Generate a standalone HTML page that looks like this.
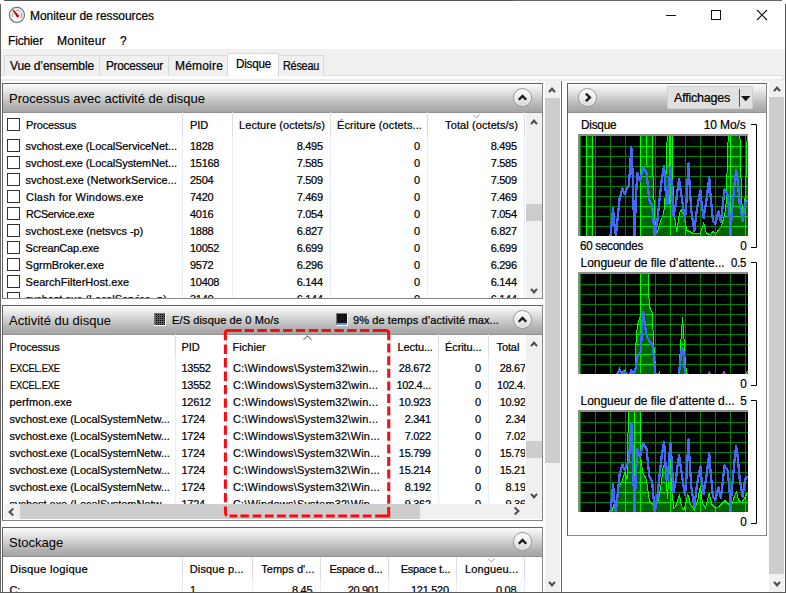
<!DOCTYPE html>
<html><head><meta charset="utf-8"><title>Moniteur de ressources</title>
<style>
html,body{margin:0;padding:0;width:786px;height:593px;overflow:hidden;}
body{width:786px;height:593px;overflow:hidden;background:#fff;position:relative;font-family:"Liberation Sans",sans-serif;}
.a{position:absolute;box-sizing:border-box;}
.t{position:absolute;white-space:pre;line-height:1;font-family:"Liberation Sans",sans-serif;-webkit-text-stroke:0.22px #000;}
.t.h{-webkit-text-stroke:0;}
.hdr{background:linear-gradient(#fbfbfb 0%,#ebebeb 20%,#cecece 50%,#b1b1b1 80%,#a5a5a5 100%);border-bottom:1px solid #929292;}
.panel{border:1px solid #606060;border-right-color:#868686;border-bottom-color:#868686;background:#fff;}
.cb{position:absolute;width:13px;height:13px;box-sizing:border-box;border:1px solid #333;background:#fff;left:7px;}
.vs{position:absolute;width:1px;background:linear-gradient(#dedede 0,#dedede 24px,#e6eef8 24px);}
.circ{position:absolute;width:19px;height:19px;border-radius:50%;box-sizing:border-box;border:1px solid #979797;background:linear-gradient(rgba(255,255,255,0.8),rgba(255,255,255,0.42));box-shadow:inset 0 0 0 1px rgba(255,255,255,0.75);}
.clip{position:absolute;left:0;top:0;width:786px;height:593px;}
#root{position:absolute;left:0;top:0;width:786px;height:593px;overflow:hidden;background:#fff;}
</style></head><body>
<div id="root">
<!-- title + menu -->
<div class="a" style="left:0;top:0;width:786px;height:49px;background:#fff"></div>
<!-- tab strip -->
<div class="a" style="left:0;top:49px;width:786px;height:32px;background:#f0f0f0"></div>
<!-- tab body frame -->
<div class="a" style="left:1px;top:75px;width:782px;height:6px;border-right:1px solid #dcdcdc;background:#fff;border-top:1px solid #dcdcdc;border-bottom:2px solid #ececec"></div>
<!-- tabs -->
<div class="a" style="left:4px;top:55px;width:96px;height:21px;background:#f0f0f0;border:1px solid #d9d9d9;border-bottom:none"></div>
<div class="a" style="left:99px;top:55px;width:70px;height:21px;background:#f0f0f0;border:1px solid #d9d9d9;border-bottom:none"></div>
<div class="a" style="left:168px;top:55px;width:60px;height:21px;background:#f0f0f0;border:1px solid #d9d9d9;border-bottom:none"></div>
<div class="a" style="left:278px;top:55px;width:46px;height:21px;background:#f0f0f0;border:1px solid #d9d9d9;border-bottom:none"></div>
<div class="a" style="left:227px;top:53px;width:52px;height:24px;background:#fff;border:1px solid #d9d9d9;border-bottom:none"></div>

<!-- PANEL 1 -->
<div class="a panel" style="left:2px;top:83px;width:541px;height:216px"></div>
<div class="a hdr" style="left:3px;top:84px;width:539px;height:29px"></div>
<div class="a" style="left:526px;top:113px;width:16px;height:185px;background:#f0f0f0"></div>
<div class="a" style="left:526px;top:204px;width:16px;height:17px;background:#cdcdcd"></div>
<div class="vs" style="left:182px;top:112px;height:186px"></div>
<div class="vs" style="left:232px;top:112px;height:186px"></div>
<div class="vs" style="left:330px;top:112px;height:186px"></div>
<div class="vs" style="left:427px;top:112px;height:186px"></div>
<div class="vs" style="left:524px;top:112px;height:186px"></div>
<div class="circ" style="left:513px;top:88px"></div>

<!-- PANEL 2 -->
<div class="a panel" style="left:2px;top:305px;width:541px;height:216px"></div>
<div class="a hdr" style="left:3px;top:306px;width:539px;height:29px"></div>
<div class="a" style="left:526px;top:335px;width:16px;height:184px;background:#f0f0f0"></div>
<div class="a" style="left:526px;top:441px;width:16px;height:17px;background:#cdcdcd"></div>
<div class="a" style="left:4px;top:504px;width:538px;height:15px;background:#f0f0f0"></div>
<div class="a" style="left:20px;top:504px;width:400px;height:15px;background:#cdcdcd"></div>
<div class="vs" style="left:175px;top:334px;height:169px"></div>
<div class="vs" style="left:226px;top:334px;height:169px"></div>
<div class="vs" style="left:390px;top:334px;height:169px"></div>
<div class="vs" style="left:438px;top:334px;height:169px"></div>
<div class="vs" style="left:488px;top:334px;height:169px"></div>
<div class="circ" style="left:513px;top:310px"></div>
<!-- legend squares -->
<svg class="a" style="left:154px;top:313px" width="12" height="13" shape-rendering="crispEdges">
<defs><pattern id="pg" width="2" height="2" patternUnits="userSpaceOnUse"><rect width="2" height="2" fill="#00a000"/><rect x="0" y="1" width="1" height="1" fill="#000"/></pattern>
<pattern id="pb" width="2" height="2" patternUnits="userSpaceOnUse"><rect width="2" height="2" fill="#0000f0"/><rect x="0" y="1" width="1" height="1" fill="#000"/></pattern></defs>
<rect width="12" height="13" fill="#fff"/><rect width="11" height="12" fill="#777"/><rect x="1" y="1" width="10" height="11" fill="url(#pg)"/></svg>
<svg class="a" style="left:336px;top:313px" width="12" height="13" shape-rendering="crispEdges">
<rect width="12" height="13" fill="#fff"/><rect width="11" height="12" fill="#777"/><rect x="1" y="1" width="10" height="11" fill="url(#pb)"/><rect x="1" y="10" width="10" height="2" fill="#5f96ff"/></svg>

<!-- PANEL 3 -->
<div class="a panel" style="left:2px;top:527px;width:541px;height:80px"></div>
<div class="a hdr" style="left:3px;top:528px;width:539px;height:29px"></div>
<div class="vs" style="left:182px;top:557px;height:40px"></div>
<div class="vs" style="left:252px;top:557px;height:40px"></div>
<div class="vs" style="left:320px;top:557px;height:40px"></div>
<div class="vs" style="left:388px;top:557px;height:40px"></div>
<div class="vs" style="left:456px;top:557px;height:40px"></div>
<div class="vs" style="left:524px;top:557px;height:40px"></div>
<div class="circ" style="left:513px;top:532px"></div>

<!-- left outer scrollbar -->
<div class="a" style="left:545px;top:81px;width:15px;height:512px;background:#f0f0f0"></div>
<div class="a" style="left:545px;top:98px;width:15px;height:365px;background:#cdcdcd"></div>
<div class="a" style="left:561px;top:81px;width:1px;height:512px;background:#696969"></div>

<!-- RIGHT PANEL -->
<div class="a panel" style="left:567px;top:83px;width:200px;height:453px"></div>
<div class="a hdr" style="left:568px;top:84px;width:198px;height:29px"></div>
<div class="circ" style="left:578px;top:88px"></div>
<div class="a" style="left:667px;top:86px;width:86px;height:23px;background:#e1e1e1;border:1px solid #d0d0d0"></div>
<div class="a" style="left:738.6px;top:89px;width:1.4px;height:18px;background:#555"></div>
<!-- right scrollbar -->
<div class="a" style="left:769px;top:81px;width:15px;height:512px;background:#f0f0f0"></div>
<div class="a" style="left:769px;top:97px;width:15px;height:477px;background:#cdcdcd"></div>

<!-- graphs -->
<svg class="a" style="left:0;top:0" width="786" height="593"><defs><clipPath id="a136"><polygon points="580.0,238.0 580.0,237.0 586.6,237.0 586.6,134.0 592.3,134.0 592.3,237.0 640.4,237.0 640.4,134.0 652.4,134.0 653.0,176.0 654.8,219.0 656.7,234.0 660.0,223.0 663.7,213.5 665.6,191.0 666.5,154.0 667.4,134.0 672.1,134.0 673.0,186.0 674.8,219.0 676.7,232.0 679.5,212.6 681.3,209.8 684.1,217.2 686.9,230.2 692.5,233.0 699.9,233.9 703.6,222.8 706.4,233.0 710.1,234.8 712.9,231.7 715.7,233.5 721.2,226.5 724.0,217.2 725.9,207.9 727.2,167.1 728.3,134.0 739.8,134.0 740.7,155.0 741.0,178.0 742.6,219.0 744.4,211.6 746.3,169.0 747.2,134.0 749.0,134.0 749.0,238.0"/></clipPath><clipPath id="c136"><rect x="580" y="136" width="168" height="100"/></clipPath><clipPath id="a274"><polygon points="580.0,376.0 580.0,376.5 615.9,376.5 619.6,368.2 621.5,371.9 625.2,369.7 628.0,376.5 631.3,369.1 633.5,371.9 635.0,368.2 635.7,347.8 636.9,331.1 638.2,321.8 640.0,318.1 640.4,292.1 641.0,272.0 648.0,272.0 648.4,279.1 648.7,295.8 649.8,307.0 652.1,312.5 653.0,329.2 653.6,342.2 654.8,355.2 655.4,371.9 657.6,376.5 659.5,372.5 661.0,376.5 678.6,376.5 680.4,347.8 681.9,327.4 682.4,317.2 683.2,325.5 684.1,340.4 685.0,357.1 686.0,368.2 687.8,376.5 707.5,376.5 709.2,373.0 711.0,376.5 722.3,376.5 724.0,373.0 725.8,376.5 745.0,376.5 747.2,371.5 749.0,370.0 749.0,376.0"/></clipPath><clipPath id="c274"><rect x="580" y="274" width="168" height="100"/></clipPath><clipPath id="a412"><polygon points="580.0,514.0 580.0,513.0 611.3,513.0 614.0,504.3 615.9,510.0 618.7,487.6 622.4,480.2 625.2,471.0 627.0,479.3 628.5,410.0 640.4,410.0 641.0,459.8 642.8,472.8 645.6,477.4 647.4,485.8 649.3,500.6 652.1,503.4 655.8,507.1 658.6,498.8 661.3,483.9 662.8,469.1 664.6,463.5 666.5,480.2 667.4,498.8 669.3,469.1 670.6,459.8 672.1,493.2 673.9,508.0 675.8,506.2 679.5,494.1 681.3,506.2 684.1,509.9 687.8,494.1 690.6,504.3 694.3,509.9 698.0,498.8 700.4,485.8 702.3,502.5 705.5,508.0 709.2,493.2 711.9,504.3 715.7,508.0 719.4,506.2 724.9,500.6 728.7,504.3 731.4,506.2 734.2,496.9 736.4,492.3 738.8,500.6 741.6,502.5 744.4,498.8 747.2,493.2 749.0,493.0 749.0,514.0"/></clipPath><clipPath id="c412"><rect x="580" y="412" width="168" height="100"/></clipPath></defs>
<rect x="578" y="134" width="170" height="102" fill="#8c8c8c"/><g clip-path="url(#c136)" shape-rendering="crispEdges"><rect x="580" y="136" width="168" height="100" fill="#000"/>
<path d="M580 146.5 H748 M580 156.5 H748 M580 166.5 H748 M580 176.5 H748 M580 186.5 H748 M580 196.5 H748 M580 206.5 H748 M580 216.5 H748 M580 226.5 H748 M580.5 136 V236 M595.5 136 V236 M610.5 136 V236 M625.5 136 V236 M640.5 136 V236 M655.5 136 V236 M670.5 136 V236 M685.5 136 V236 M700.5 136 V236 M715.5 136 V236 M730.5 136 V236 M745.5 136 V236" stroke="#008200" stroke-width="1" fill="none"/>
<polygon points="580.0,238.0 580.0,237.0 586.6,237.0 586.6,134.0 592.3,134.0 592.3,237.0 640.4,237.0 640.4,134.0 652.4,134.0 653.0,176.0 654.8,219.0 656.7,234.0 660.0,223.0 663.7,213.5 665.6,191.0 666.5,154.0 667.4,134.0 672.1,134.0 673.0,186.0 674.8,219.0 676.7,232.0 679.5,212.6 681.3,209.8 684.1,217.2 686.9,230.2 692.5,233.0 699.9,233.9 703.6,222.8 706.4,233.0 710.1,234.8 712.9,231.7 715.7,233.5 721.2,226.5 724.0,217.2 725.9,207.9 727.2,167.1 728.3,134.0 739.8,134.0 740.7,155.0 741.0,178.0 742.6,219.0 744.4,211.6 746.3,169.0 747.2,134.0 749.0,134.0 749.0,238.0" fill="#006400" stroke="none"/>
<path d="M580 146.5 H748 M580 156.5 H748 M580 166.5 H748 M580 176.5 H748 M580 186.5 H748 M580 196.5 H748 M580 206.5 H748 M580 216.5 H748 M580 226.5 H748 M580.5 136 V236 M595.5 136 V236 M610.5 136 V236 M625.5 136 V236 M640.5 136 V236 M655.5 136 V236 M670.5 136 V236 M685.5 136 V236 M700.5 136 V236 M715.5 136 V236 M730.5 136 V236 M745.5 136 V236" stroke="#00e600" stroke-width="1" fill="none" clip-path="url(#a136)"/>
<polyline points="580.0,237.0 586.6,237.0 586.6,134.0 592.3,134.0 592.3,237.0 640.4,237.0 640.4,134.0 652.4,134.0 653.0,176.0 654.8,219.0 656.7,234.0 660.0,223.0 663.7,213.5 665.6,191.0 666.5,154.0 667.4,134.0 672.1,134.0 673.0,186.0 674.8,219.0 676.7,232.0 679.5,212.6 681.3,209.8 684.1,217.2 686.9,230.2 692.5,233.0 699.9,233.9 703.6,222.8 706.4,233.0 710.1,234.8 712.9,231.7 715.7,233.5 721.2,226.5 724.0,217.2 725.9,207.9 727.2,167.1 728.3,134.0 739.8,134.0 740.7,155.0 741.0,178.0 742.6,219.0 744.4,211.6 746.3,169.0 747.2,134.0 749.0,134.0" fill="none" stroke="#00ff00" stroke-width="1"/>
<path d="M646.5 135.0 V165.0" stroke="#00ff00" stroke-width="1"/>
<path d="M669.3 135.0 V204.0" stroke="#00ff00" stroke-width="1"/>
<path d="M670.6 135.0 V167.0" stroke="#00ff00" stroke-width="1"/>
<path d="M730.5 135.0 V236.0" stroke="#00ff00" stroke-width="1"/>
<polyline points="610.5,236.0 613.1,207.9 614.0,221.0 615.9,236.0 617.2,222.8 619.6,198.6 622.4,188.4 624.6,194.0 628.9,184.7 629.8,172.7 631.3,146.7 632.6,172.7 633.5,204.2 634.4,236.0 635.7,204.2 637.2,172.7 640.0,181.0 643.2,167.1 646.5,172.7 649.3,200.5 652.1,205.1 654.8,236.0 657.6,219.0 660.4,191.2 661.9,178.2 664.1,166.2 666.5,203.3 667.8,204.2 669.3,180.1 670.6,167.1 672.1,191.2 673.4,216.3 675.8,204.2 677.6,189.4 679.1,179.2 681.3,194.9 683.2,207.9 685.0,219.0 686.3,204.2 687.5,182.0 688.4,163.4 689.7,185.7 691.2,209.8 694.3,231.1 697.1,207.9 700.4,190.3 701.7,204.2 703.6,218.1 706.4,200.5 709.2,177.3 710.5,194.9 712.9,220.9 715.3,223.7 718.4,211.6 720.9,221.8 723.1,202.4 724.4,189.4 727.7,194.9 729.6,215.3 730.5,236.0 731.4,219.1 734.2,187.5 736.1,169.9 737.6,180.1 739.8,204.2 742.6,220.9 744.4,207.9 745.7,202.4 748.0,200.5" fill="none" stroke="#4169ff" stroke-width="2.3" stroke-linejoin="round"/></g>
<rect x="578" y="272" width="170" height="102" fill="#8c8c8c"/><g clip-path="url(#c274)" shape-rendering="crispEdges"><rect x="580" y="274" width="168" height="100" fill="#000"/>
<path d="M580 284.5 H748 M580 294.5 H748 M580 304.5 H748 M580 314.5 H748 M580 324.5 H748 M580 334.5 H748 M580 344.5 H748 M580 354.5 H748 M580 364.5 H748 M580.5 274 V374 M595.5 274 V374 M610.5 274 V374 M625.5 274 V374 M640.5 274 V374 M655.5 274 V374 M670.5 274 V374 M685.5 274 V374 M700.5 274 V374 M715.5 274 V374 M730.5 274 V374 M745.5 274 V374" stroke="#008200" stroke-width="1" fill="none"/>
<polygon points="580.0,376.0 580.0,376.5 615.9,376.5 619.6,368.2 621.5,371.9 625.2,369.7 628.0,376.5 631.3,369.1 633.5,371.9 635.0,368.2 635.7,347.8 636.9,331.1 638.2,321.8 640.0,318.1 640.4,292.1 641.0,272.0 648.0,272.0 648.4,279.1 648.7,295.8 649.8,307.0 652.1,312.5 653.0,329.2 653.6,342.2 654.8,355.2 655.4,371.9 657.6,376.5 659.5,372.5 661.0,376.5 678.6,376.5 680.4,347.8 681.9,327.4 682.4,317.2 683.2,325.5 684.1,340.4 685.0,357.1 686.0,368.2 687.8,376.5 707.5,376.5 709.2,373.0 711.0,376.5 722.3,376.5 724.0,373.0 725.8,376.5 745.0,376.5 747.2,371.5 749.0,370.0 749.0,376.0" fill="#006400" stroke="none"/>
<path d="M580 284.5 H748 M580 294.5 H748 M580 304.5 H748 M580 314.5 H748 M580 324.5 H748 M580 334.5 H748 M580 344.5 H748 M580 354.5 H748 M580 364.5 H748 M580.5 274 V374 M595.5 274 V374 M610.5 274 V374 M625.5 274 V374 M640.5 274 V374 M655.5 274 V374 M670.5 274 V374 M685.5 274 V374 M700.5 274 V374 M715.5 274 V374 M730.5 274 V374 M745.5 274 V374" stroke="#00e600" stroke-width="1" fill="none" clip-path="url(#a274)"/>
<polyline points="580.0,376.5 615.9,376.5 619.6,368.2 621.5,371.9 625.2,369.7 628.0,376.5 631.3,369.1 633.5,371.9 635.0,368.2 635.7,347.8 636.9,331.1 638.2,321.8 640.0,318.1 640.4,292.1 641.0,272.0 648.0,272.0 648.4,279.1 648.7,295.8 649.8,307.0 652.1,312.5 653.0,329.2 653.6,342.2 654.8,355.2 655.4,371.9 657.6,376.5 659.5,372.5 661.0,376.5 678.6,376.5 680.4,347.8 681.9,327.4 682.4,317.2 683.2,325.5 684.1,340.4 685.0,357.1 686.0,368.2 687.8,376.5 707.5,376.5 709.2,373.0 711.0,376.5 722.3,376.5 724.0,373.0 725.8,376.5 745.0,376.5 747.2,371.5 749.0,370.0" fill="none" stroke="#00ff00" stroke-width="1"/>
<polyline points="615.9,376.5 619.6,370.0 622.4,373.4 625.2,372.0 628.9,376.5 631.3,370.0 633.1,376.5 635.4,370.0 637.2,357.1 640.9,351.5 641.9,329.2 643.2,311.6 644.7,323.7 646.5,334.8 649.3,341.3 652.4,345.0 653.9,357.1 655.4,376.5 678.6,376.5 680.0,364.5 681.9,347.8 683.2,349.6 684.1,360.8 685.0,371.9 686.9,376.5 707.5,376.5 709.2,372.5 711.0,376.5 722.3,376.5 724.0,372.5 725.8,376.5 748.0,376.5" fill="none" stroke="#4169ff" stroke-width="2.3" stroke-linejoin="round"/></g>
<rect x="578" y="410" width="170" height="102" fill="#8c8c8c"/><g clip-path="url(#c412)" shape-rendering="crispEdges"><rect x="580" y="412" width="168" height="100" fill="#000"/>
<path d="M580 422.5 H748 M580 432.5 H748 M580 442.5 H748 M580 452.5 H748 M580 462.5 H748 M580 472.5 H748 M580 482.5 H748 M580 492.5 H748 M580 502.5 H748 M580.5 412 V512 M595.5 412 V512 M610.5 412 V512 M625.5 412 V512 M640.5 412 V512 M655.5 412 V512 M670.5 412 V512 M685.5 412 V512 M700.5 412 V512 M715.5 412 V512 M730.5 412 V512 M745.5 412 V512" stroke="#008200" stroke-width="1" fill="none"/>
<polygon points="580.0,514.0 580.0,513.0 611.3,513.0 614.0,504.3 615.9,510.0 618.7,487.6 622.4,480.2 625.2,471.0 627.0,479.3 628.5,410.0 640.4,410.0 641.0,459.8 642.8,472.8 645.6,477.4 647.4,485.8 649.3,500.6 652.1,503.4 655.8,507.1 658.6,498.8 661.3,483.9 662.8,469.1 664.6,463.5 666.5,480.2 667.4,498.8 669.3,469.1 670.6,459.8 672.1,493.2 673.9,508.0 675.8,506.2 679.5,494.1 681.3,506.2 684.1,509.9 687.8,494.1 690.6,504.3 694.3,509.9 698.0,498.8 700.4,485.8 702.3,502.5 705.5,508.0 709.2,493.2 711.9,504.3 715.7,508.0 719.4,506.2 724.9,500.6 728.7,504.3 731.4,506.2 734.2,496.9 736.4,492.3 738.8,500.6 741.6,502.5 744.4,498.8 747.2,493.2 749.0,493.0 749.0,514.0" fill="#006400" stroke="none"/>
<path d="M580 422.5 H748 M580 432.5 H748 M580 442.5 H748 M580 452.5 H748 M580 462.5 H748 M580 472.5 H748 M580 482.5 H748 M580 492.5 H748 M580 502.5 H748 M580.5 412 V512 M595.5 412 V512 M610.5 412 V512 M625.5 412 V512 M640.5 412 V512 M655.5 412 V512 M670.5 412 V512 M685.5 412 V512 M700.5 412 V512 M715.5 412 V512 M730.5 412 V512 M745.5 412 V512" stroke="#00e600" stroke-width="1" fill="none" clip-path="url(#a412)"/>
<polyline points="580.0,513.0 611.3,513.0 614.0,504.3 615.9,510.0 618.7,487.6 622.4,480.2 625.2,471.0 627.0,479.3 628.5,410.0 640.4,410.0 641.0,459.8 642.8,472.8 645.6,477.4 647.4,485.8 649.3,500.6 652.1,503.4 655.8,507.1 658.6,498.8 661.3,483.9 662.8,469.1 664.6,463.5 666.5,480.2 667.4,498.8 669.3,469.1 670.6,459.8 672.1,493.2 673.9,508.0 675.8,506.2 679.5,494.1 681.3,506.2 684.1,509.9 687.8,494.1 690.6,504.3 694.3,509.9 698.0,498.8 700.4,485.8 702.3,502.5 705.5,508.0 709.2,493.2 711.9,504.3 715.7,508.0 719.4,506.2 724.9,500.6 728.7,504.3 731.4,506.2 734.2,496.9 736.4,492.3 738.8,500.6 741.6,502.5 744.4,498.8 747.2,493.2 749.0,493.0" fill="none" stroke="#00ff00" stroke-width="1"/>
<path d="M634.4 411.0 V512.0" stroke="#00ff00" stroke-width="1"/>
<polyline points="610.5,512.0 613.1,483.9 614.0,497.0 615.9,512.0 617.2,498.8 619.6,474.6 622.4,464.4 624.6,470.0 628.9,460.7 629.8,448.7 631.3,422.7 632.6,448.7 633.5,480.2 634.4,512.0 635.7,480.2 637.2,448.7 640.0,457.0 643.2,443.1 646.5,448.7 649.3,476.5 652.1,481.1 654.8,512.0 657.6,495.0 660.4,467.2 661.9,454.2 664.1,442.2 666.5,479.3 667.8,480.2 669.3,456.1 670.6,443.1 672.1,467.2 673.4,492.3 675.8,480.2 677.6,465.4 679.1,455.2 681.3,470.9 683.2,483.9 685.0,495.0 686.3,480.2 687.5,458.0 688.4,439.4 689.7,461.7 691.2,485.8 694.3,507.1 697.1,483.9 700.4,466.3 701.7,480.2 703.6,494.1 706.4,476.5 709.2,453.3 710.5,470.9 712.9,496.9 715.3,499.7 718.4,487.6 720.9,497.8 723.1,478.4 724.4,465.4 727.7,470.9 729.6,491.3 730.5,512.0 731.4,495.1 734.2,463.5 736.1,445.9 737.6,456.1 739.8,480.2 742.6,496.9 744.4,483.9 745.7,478.4 748.0,476.5" fill="none" stroke="#4169ff" stroke-width="2.3" stroke-linejoin="round"/></g>
</svg>

<!-- brackets -->
<svg class="a" style="left:0;top:0" width="786" height="593"><path d="M751 124.5 H756.5 V247.5 H751 M751 262.5 H756.5 V385.5 H751 M751 400.5 H756.5 V523.5 H751" fill="none" stroke="#000" stroke-width="1"/></svg>
<!-- app icon -->
<svg class="a" style="left:7px;top:5px" width="20" height="20" viewBox="0 0 20 20">
<circle cx="9.9" cy="9.9" r="7.5" fill="#fafafa" stroke="#737373" stroke-width="1.3"/>
<circle cx="9.9" cy="9.9" r="6.4" fill="none" stroke="#dedede" stroke-width="0.9"/>
<path d="M5.4 12.1 L5.4 8.2" fill="none" stroke="#86a08a" stroke-width="0.9"/>
<path d="M8.6 5.4 Q11.8 4.6 13.7 7.1" fill="none" stroke="#86a08a" stroke-width="0.9"/>
<path d="M14.5 8.2 L14.5 11.3 Q14.4 12.5 13.2 12.8" fill="none" stroke="#f07c1e" stroke-width="1.1"/>
<path d="M5.5 5.5 L6.7 4.7 L12.4 11.1 L10.5 13.1 Z" fill="#d4000f"/>
</svg>
<!-- window controls -->
<div class="a" style="left:666px;top:15px;width:10px;height:1px;background:#111"></div>
<div class="a" style="left:711px;top:10px;width:10px;height:10px;border:1px solid #111"></div>
<svg class="a" style="left:756px;top:9px" width="12" height="12"><path d="M1 1 L11 11 M11 1 L1 11" stroke="#111" stroke-width="1.1" fill="none"/></svg>
<!-- circle button chevrons -->
<svg class="a" style="left:513px;top:88px" width="19" height="19"><path d="M5.8 11.8 L9.5 8 L13.2 11.8" fill="none" stroke="#1a1a1a" stroke-width="2.3"/></svg>
<svg class="a" style="left:513px;top:310px" width="19" height="19"><path d="M5.8 11.8 L9.5 8 L13.2 11.8" fill="none" stroke="#1a1a1a" stroke-width="2.3"/></svg>
<svg class="a" style="left:513px;top:532px" width="19" height="19"><path d="M5.8 11.8 L9.5 8 L13.2 11.8" fill="none" stroke="#1a1a1a" stroke-width="2.3"/></svg>
<svg class="a" style="left:578px;top:88px" width="19" height="19"><path d="M7.9 5.6 L11.9 9.4 L7.9 13.2" fill="none" stroke="#1a1a1a" stroke-width="2.3"/></svg>
<!-- dropdown arrow -->
<svg class="a" style="left:741px;top:95px" width="10" height="8"><path d="M0 1 L9.4 1 L4.7 6.2 Z" fill="#111"/></svg>
<!-- scroll arrows -->
<svg class="a" style="left:547.4px;top:85.6px" width="10" height="8"><path d="M2 6.1 L5 2.7 L8 6.1" fill="none" stroke="#4c4c4c" stroke-width="2.1"/></svg>
<svg class="a" style="left:771.5px;top:85.3px" width="10" height="8"><path d="M2 6.1 L5 2.7 L8 6.1" fill="none" stroke="#4c4c4c" stroke-width="2.1"/></svg>
<svg class="a" style="left:771.6px;top:580px" width="10" height="8"><path d="M2 1.9 L5 5.3 L8 1.9" fill="none" stroke="#4c4c4c" stroke-width="2.1"/></svg>
<svg class="a" style="left:547.4px;top:580px" width="10" height="8"><path d="M2 1.9 L5 5.3 L8 1.9" fill="none" stroke="#4c4c4c" stroke-width="2.1"/></svg>
<svg class="a" style="left:528.5px;top:117.6px" width="10" height="8"><path d="M2 6.1 L5 2.7 L8 6.1" fill="none" stroke="#4c4c4c" stroke-width="2.1"/></svg>
<svg class="a" style="left:528.5px;top:286.5px" width="10" height="8"><path d="M2 1.9 L5 5.3 L8 1.9" fill="none" stroke="#4c4c4c" stroke-width="2.1"/></svg>
<svg class="a" style="left:528.5px;top:339.6px" width="10" height="8"><path d="M2 6.1 L5 2.7 L8 6.1" fill="none" stroke="#4c4c4c" stroke-width="2.1"/></svg>
<svg class="a" style="left:528.5px;top:491.7px" width="10" height="8"><path d="M2 1.9 L5 5.3 L8 1.9" fill="none" stroke="#4c4c4c" stroke-width="2.1"/></svg>
<svg class="a" style="left:6.8px;top:506.6px" width="8" height="10"><path d="M6.3 1.6 L2.6 5 L6.3 8.4" fill="none" stroke="#505050" stroke-width="2.1"/></svg>
<svg class="a" style="left:512.5px;top:506.4px" width="8" height="10"><path d="M1.7 1.6 L5.4 5 L1.7 8.4" fill="none" stroke="#505050" stroke-width="2.1"/></svg>
<!-- sort indicators -->
<svg class="a" style="left:472.3px;top:113.6px" width="10" height="6"><path d="M1 0.5 L4.4 3.9 L7.8 0.5" fill="none" stroke="#9a9a9a" stroke-width="1"/></svg>
<svg class="a" style="left:303px;top:335.3px" width="10" height="6"><path d="M0.5 4.8 L4.5 0.8 L8.5 4.8" fill="none" stroke="#7c7c7c" stroke-width="1.1"/></svg>
<svg class="a" style="left:486.8px;top:557.6px" width="10" height="6"><path d="M1 0.5 L4.4 3.9 L7.8 0.5" fill="none" stroke="#9a9a9a" stroke-width="1"/></svg>
<!-- checkboxes -->
<div class="clip" style="clip-path:inset(0 261px 295px 0)">
<div class="cb" style="top:118px"></div>
<div class="cb" style="top:139px"></div>
<div class="cb" style="top:156px"></div>
<div class="cb" style="top:173px"></div>
<div class="cb" style="top:190px"></div>
<div class="cb" style="top:207px"></div>
<div class="cb" style="top:224px"></div>
<div class="cb" style="top:241px"></div>
<div class="cb" style="top:258px"></div>
<div class="cb" style="top:275px"></div>
<div class="cb" style="top:292px"></div>
</div>

<!-- text -->
<span class="t" style="left:30.00px;top:9.84px;font-size:12px;letter-spacing:-0.063px;color:#000">Moniteur de ressources</span>
<span class="t" style="left:8.00px;top:34.84px;font-size:12px;letter-spacing:-0.145px;color:#000">Fichier</span>
<span class="t" style="left:57.00px;top:34.84px;font-size:12px;letter-spacing:0.250px;color:#000;transform:scaleX(1.0064);transform-origin:0 0">Moniteur</span>
<span class="t" style="left:120.00px;top:34.84px;font-size:12px;letter-spacing:0.000px;color:#000">?</span>
<span class="t" style="left:10.00px;top:59.84px;font-size:12px;letter-spacing:-0.116px;color:#000">Vue d’ensemble</span>
<span class="t" style="left:106.00px;top:59.84px;font-size:12px;letter-spacing:-0.250px;color:#000;transform:scaleX(0.9793);transform-origin:0 0">Processeur</span>
<span class="t" style="left:175.00px;top:59.84px;font-size:12px;letter-spacing:0.188px;color:#000">Mémoire</span>
<span class="t" style="left:236.00px;top:57.84px;font-size:12px;letter-spacing:-0.250px;color:#000;transform:scaleX(0.9760);transform-origin:0 0">Disque</span>
<span class="t" style="left:283.00px;top:59.84px;font-size:12px;letter-spacing:-0.250px;color:#000;transform:scaleX(0.9028);transform-origin:0 0">Réseau</span>
<span class="t h" style="left:9.00px;top:92.00px;font-size:13px;letter-spacing:0.005px;color:#000">Processus avec activité de disque</span>
<span class="t h" style="left:9.00px;top:314.00px;font-size:13px;letter-spacing:0.000px;color:#000">Activité du disque</span>
<span class="t h" style="left:9.00px;top:536.00px;font-size:13px;letter-spacing:0.000px;color:#000">Stockage</span>
<span class="t" style="left:172.00px;top:314.69px;font-size:11px;letter-spacing:0.122px;color:#000">E/S disque de 0 Mo/s</span>
<span class="t" style="left:353.00px;top:314.69px;font-size:11px;letter-spacing:0.101px;color:#000">9% de temps d’activité max...</span>
<span class="t" style="left:26.00px;top:119.69px;font-size:11px;letter-spacing:-0.151px;color:#000">Processus</span>
<span class="t" style="left:190.00px;top:119.69px;font-size:11px;letter-spacing:-0.100px;color:#000">PID</span>
<span class="t" style="right:460.94px;top:119.69px;font-size:11px;letter-spacing:0.056px;color:#000">Lecture (octets/s)</span>
<span class="t" style="left:337.00px;top:119.69px;font-size:11px;letter-spacing:0.098px;color:#000">Écriture (octets...</span>
<span class="t" style="right:267.91px;top:119.69px;font-size:11px;letter-spacing:0.092px;color:#000">Total (octets/s)</span>
<span class="t" style="left:9.50px;top:341.69px;font-size:11px;letter-spacing:-0.151px;color:#000">Processus</span>
<span class="t" style="left:181.50px;top:341.69px;font-size:11px;letter-spacing:-0.100px;color:#000">PID</span>
<span class="t" style="left:232.60px;top:341.69px;font-size:11px;letter-spacing:0.026px;color:#000">Fichier</span>
<span class="t" style="left:397.50px;top:341.69px;font-size:11px;letter-spacing:-0.100px;color:#000">Lectu...</span>
<span class="t" style="left:445.00px;top:341.69px;font-size:11px;letter-spacing:-0.100px;color:#000">Écritu...</span>
<span class="t" style="left:496.50px;top:341.69px;font-size:11px;letter-spacing:-0.100px;color:#000">Total</span>
<span class="t" style="left:674.20px;top:91.00px;font-size:13px;letter-spacing:-0.250px;color:#000;transform:scaleX(0.9660);transform-origin:0 0">Affichages</span>
<span class="t" style="left:580.60px;top:118.84px;font-size:12px;letter-spacing:-0.250px;color:#000;transform:scaleX(0.9844);transform-origin:0 0">Disque</span>
<span class="t" style="right:40.30px;top:118.84px;font-size:12px;letter-spacing:-0.098px;color:#000">10 Mo/s</span>
<span class="t" style="left:580.40px;top:239.84px;font-size:12px;letter-spacing:-0.250px;color:#000;transform:scaleX(0.9646);transform-origin:0 0">60 secondes</span>
<span class="t" style="right:39.94px;top:239.84px;font-size:12px;letter-spacing:-0.250px;color:#000;transform:scaleX(0.9786);transform-origin:100% 0">0</span>
<span class="t" style="left:580.60px;top:256.84px;font-size:12px;letter-spacing:-0.050px;color:#000">Longueur de file d’attente...</span>
<span class="t" style="right:39.94px;top:256.84px;font-size:12px;letter-spacing:-0.250px;color:#000;transform:scaleX(0.9412);transform-origin:100% 0">0.5</span>
<span class="t" style="right:39.94px;top:377.84px;font-size:12px;letter-spacing:-0.250px;color:#000;transform:scaleX(0.9786);transform-origin:100% 0">0</span>
<span class="t" style="left:580.60px;top:394.84px;font-size:12px;letter-spacing:-0.047px;color:#000">Longueur de file d’attente d...</span>
<span class="t" style="right:39.94px;top:394.84px;font-size:12px;letter-spacing:-0.250px;color:#000;transform:scaleX(0.9786);transform-origin:100% 0">5</span>
<span class="t" style="right:39.94px;top:515.84px;font-size:12px;letter-spacing:-0.250px;color:#000;transform:scaleX(0.9786);transform-origin:100% 0">0</span>
<div class="clip" style="clip-path:inset(0 261px 295px 0)">
<span class="t" style="left:25.60px;top:140.69px;font-size:11px;letter-spacing:-0.090px;color:#000">svchost.exe (LocalServiceNet...</span>
<span class="t" style="left:190.00px;top:140.69px;font-size:11px;letter-spacing:-0.300px;color:#000">1828</span>
<span class="t" style="right:463.30px;top:140.69px;font-size:11px;letter-spacing:-0.300px;color:#000">8.495</span>
<span class="t" style="right:366.30px;top:140.69px;font-size:11px;letter-spacing:-0.300px;color:#000">0</span>
<span class="t" style="right:269.30px;top:140.69px;font-size:11px;letter-spacing:-0.300px;color:#000">8.495</span>
<span class="t" style="left:25.60px;top:157.69px;font-size:11px;letter-spacing:-0.092px;color:#000">svchost.exe (LocalSystemNet...</span>
<span class="t" style="left:190.00px;top:157.69px;font-size:11px;letter-spacing:-0.300px;color:#000">15168</span>
<span class="t" style="right:463.30px;top:157.69px;font-size:11px;letter-spacing:-0.300px;color:#000">7.585</span>
<span class="t" style="right:366.30px;top:157.69px;font-size:11px;letter-spacing:-0.300px;color:#000">0</span>
<span class="t" style="right:269.30px;top:157.69px;font-size:11px;letter-spacing:-0.300px;color:#000">7.585</span>
<span class="t" style="left:25.60px;top:174.69px;font-size:11px;letter-spacing:0.010px;color:#000">svchost.exe (NetworkService...</span>
<span class="t" style="left:190.00px;top:174.69px;font-size:11px;letter-spacing:-0.300px;color:#000">2504</span>
<span class="t" style="right:463.30px;top:174.69px;font-size:11px;letter-spacing:-0.300px;color:#000">7.509</span>
<span class="t" style="right:366.30px;top:174.69px;font-size:11px;letter-spacing:-0.300px;color:#000">0</span>
<span class="t" style="right:269.30px;top:174.69px;font-size:11px;letter-spacing:-0.300px;color:#000">7.509</span>
<span class="t" style="left:25.60px;top:191.69px;font-size:11px;letter-spacing:0.250px;color:#000;transform:scaleX(0.9987);transform-origin:0 0">Clash for Windows.exe</span>
<span class="t" style="left:190.00px;top:191.69px;font-size:11px;letter-spacing:-0.300px;color:#000">7420</span>
<span class="t" style="right:463.30px;top:191.69px;font-size:11px;letter-spacing:-0.300px;color:#000">7.469</span>
<span class="t" style="right:366.30px;top:191.69px;font-size:11px;letter-spacing:-0.300px;color:#000">0</span>
<span class="t" style="right:269.30px;top:191.69px;font-size:11px;letter-spacing:-0.300px;color:#000">7.469</span>
<span class="t" style="left:25.60px;top:208.69px;font-size:11px;letter-spacing:-0.250px;color:#000;transform:scaleX(0.9728);transform-origin:0 0">RCService.exe</span>
<span class="t" style="left:190.00px;top:208.69px;font-size:11px;letter-spacing:-0.300px;color:#000">4016</span>
<span class="t" style="right:463.30px;top:208.69px;font-size:11px;letter-spacing:-0.300px;color:#000">7.054</span>
<span class="t" style="right:366.30px;top:208.69px;font-size:11px;letter-spacing:-0.300px;color:#000">0</span>
<span class="t" style="right:269.30px;top:208.69px;font-size:11px;letter-spacing:-0.300px;color:#000">7.054</span>
<span class="t" style="left:25.60px;top:225.69px;font-size:11px;letter-spacing:-0.041px;color:#000">svchost.exe (netsvcs -p)</span>
<span class="t" style="left:190.00px;top:225.69px;font-size:11px;letter-spacing:-0.300px;color:#000">1888</span>
<span class="t" style="right:463.30px;top:225.69px;font-size:11px;letter-spacing:-0.300px;color:#000">6.827</span>
<span class="t" style="right:366.30px;top:225.69px;font-size:11px;letter-spacing:-0.300px;color:#000">0</span>
<span class="t" style="right:269.30px;top:225.69px;font-size:11px;letter-spacing:-0.300px;color:#000">6.827</span>
<span class="t" style="left:25.60px;top:242.69px;font-size:11px;letter-spacing:-0.187px;color:#000">ScreanCap.exe</span>
<span class="t" style="left:190.00px;top:242.69px;font-size:11px;letter-spacing:-0.300px;color:#000">10052</span>
<span class="t" style="right:463.30px;top:242.69px;font-size:11px;letter-spacing:-0.300px;color:#000">6.699</span>
<span class="t" style="right:366.30px;top:242.69px;font-size:11px;letter-spacing:-0.300px;color:#000">0</span>
<span class="t" style="right:269.30px;top:242.69px;font-size:11px;letter-spacing:-0.300px;color:#000">6.699</span>
<span class="t" style="left:25.60px;top:259.69px;font-size:11px;letter-spacing:-0.020px;color:#000">SgrmBroker.exe</span>
<span class="t" style="left:190.00px;top:259.69px;font-size:11px;letter-spacing:-0.300px;color:#000">9572</span>
<span class="t" style="right:463.30px;top:259.69px;font-size:11px;letter-spacing:-0.300px;color:#000">6.296</span>
<span class="t" style="right:366.30px;top:259.69px;font-size:11px;letter-spacing:-0.300px;color:#000">0</span>
<span class="t" style="right:269.30px;top:259.69px;font-size:11px;letter-spacing:-0.300px;color:#000">6.296</span>
<span class="t" style="left:25.60px;top:276.69px;font-size:11px;letter-spacing:0.039px;color:#000">SearchFilterHost.exe</span>
<span class="t" style="left:190.00px;top:276.69px;font-size:11px;letter-spacing:-0.300px;color:#000">10408</span>
<span class="t" style="right:463.30px;top:276.69px;font-size:11px;letter-spacing:-0.300px;color:#000">6.144</span>
<span class="t" style="right:366.30px;top:276.69px;font-size:11px;letter-spacing:-0.300px;color:#000">0</span>
<span class="t" style="right:269.30px;top:276.69px;font-size:11px;letter-spacing:-0.300px;color:#000">6.144</span>
<span class="t" style="left:25.60px;top:293.69px;font-size:11px;letter-spacing:-0.113px;color:#000">svchost.exe (LocalService -p)</span>
<span class="t" style="left:190.00px;top:293.69px;font-size:11px;letter-spacing:-0.300px;color:#000">3140</span>
<span class="t" style="right:463.30px;top:293.69px;font-size:11px;letter-spacing:-0.300px;color:#000">6.144</span>
<span class="t" style="right:366.30px;top:293.69px;font-size:11px;letter-spacing:-0.300px;color:#000">0</span>
<span class="t" style="right:269.30px;top:293.69px;font-size:11px;letter-spacing:-0.300px;color:#000">6.144</span>
</div>
<div class="clip" style="clip-path:inset(0 261px 89px 0)">
<span class="t" style="left:9.50px;top:363.19px;font-size:11px;letter-spacing:-0.250px;color:#000;transform:scaleX(0.8422);transform-origin:0 0">EXCEL.EXE</span>
<span class="t" style="left:181.50px;top:363.19px;font-size:11px;letter-spacing:-0.300px;color:#000">13552</span>
<span class="t" style="left:232.60px;top:363.19px;font-size:11px;letter-spacing:0.250px;color:#000;transform:scaleX(0.9967);transform-origin:0 0">C:\Windows\System32\win...</span>
<span class="t" style="right:355.30px;top:363.19px;font-size:11px;letter-spacing:-0.300px;color:#000">28.672</span>
<span class="t" style="right:305.30px;top:363.19px;font-size:11px;letter-spacing:-0.300px;color:#000">0</span>
<span class="t" style="right:260.30px;top:363.19px;font-size:11px;letter-spacing:-0.300px;color:#000">28.67</span>
<span class="t" style="left:9.50px;top:380.19px;font-size:11px;letter-spacing:-0.250px;color:#000;transform:scaleX(0.8422);transform-origin:0 0">EXCEL.EXE</span>
<span class="t" style="left:181.50px;top:380.19px;font-size:11px;letter-spacing:-0.300px;color:#000">13552</span>
<span class="t" style="left:232.60px;top:380.19px;font-size:11px;letter-spacing:0.250px;color:#000;transform:scaleX(0.9967);transform-origin:0 0">C:\Windows\System32\win...</span>
<span class="t" style="right:355.30px;top:380.19px;font-size:11px;letter-spacing:-0.300px;color:#000">102.4...</span>
<span class="t" style="right:305.30px;top:380.19px;font-size:11px;letter-spacing:-0.300px;color:#000">0</span>
<span class="t" style="right:260.30px;top:380.19px;font-size:11px;letter-spacing:-0.300px;color:#000">102.4.</span>
<span class="t" style="left:9.50px;top:397.19px;font-size:11px;letter-spacing:0.131px;color:#000">perfmon.exe</span>
<span class="t" style="left:181.50px;top:397.19px;font-size:11px;letter-spacing:-0.300px;color:#000">12612</span>
<span class="t" style="left:232.60px;top:397.19px;font-size:11px;letter-spacing:0.250px;color:#000;transform:scaleX(0.9967);transform-origin:0 0">C:\Windows\System32\win...</span>
<span class="t" style="right:355.30px;top:397.19px;font-size:11px;letter-spacing:-0.300px;color:#000">10.923</span>
<span class="t" style="right:305.30px;top:397.19px;font-size:11px;letter-spacing:-0.300px;color:#000">0</span>
<span class="t" style="right:260.30px;top:397.19px;font-size:11px;letter-spacing:-0.300px;color:#000">10.92</span>
<span class="t" style="left:9.50px;top:414.19px;font-size:11px;letter-spacing:-0.036px;color:#000">svchost.exe (LocalSystemNetw...</span>
<span class="t" style="left:181.50px;top:414.19px;font-size:11px;letter-spacing:-0.300px;color:#000">1724</span>
<span class="t" style="left:232.60px;top:414.19px;font-size:11px;letter-spacing:0.250px;color:#000;transform:scaleX(0.9967);transform-origin:0 0">C:\Windows\System32\win...</span>
<span class="t" style="right:355.30px;top:414.19px;font-size:11px;letter-spacing:-0.300px;color:#000">2.341</span>
<span class="t" style="right:305.30px;top:414.19px;font-size:11px;letter-spacing:-0.300px;color:#000">0</span>
<span class="t" style="right:260.30px;top:414.19px;font-size:11px;letter-spacing:-0.300px;color:#000">2.34</span>
<span class="t" style="left:9.50px;top:431.19px;font-size:11px;letter-spacing:-0.036px;color:#000">svchost.exe (LocalSystemNetw...</span>
<span class="t" style="left:181.50px;top:431.19px;font-size:11px;letter-spacing:-0.300px;color:#000">1724</span>
<span class="t" style="left:232.60px;top:431.19px;font-size:11px;letter-spacing:0.250px;color:#000;transform:scaleX(0.9910);transform-origin:0 0">C:\Windows\System32\Win...</span>
<span class="t" style="right:355.30px;top:431.19px;font-size:11px;letter-spacing:-0.300px;color:#000">7.022</span>
<span class="t" style="right:305.30px;top:431.19px;font-size:11px;letter-spacing:-0.300px;color:#000">0</span>
<span class="t" style="right:260.30px;top:431.19px;font-size:11px;letter-spacing:-0.300px;color:#000">7.02</span>
<span class="t" style="left:9.50px;top:448.19px;font-size:11px;letter-spacing:-0.036px;color:#000">svchost.exe (LocalSystemNetw...</span>
<span class="t" style="left:181.50px;top:448.19px;font-size:11px;letter-spacing:-0.300px;color:#000">1724</span>
<span class="t" style="left:232.60px;top:448.19px;font-size:11px;letter-spacing:0.250px;color:#000;transform:scaleX(0.9910);transform-origin:0 0">C:\Windows\System32\Win...</span>
<span class="t" style="right:355.30px;top:448.19px;font-size:11px;letter-spacing:-0.300px;color:#000">15.799</span>
<span class="t" style="right:305.30px;top:448.19px;font-size:11px;letter-spacing:-0.300px;color:#000">0</span>
<span class="t" style="right:260.30px;top:448.19px;font-size:11px;letter-spacing:-0.300px;color:#000">15.79</span>
<span class="t" style="left:9.50px;top:465.19px;font-size:11px;letter-spacing:-0.036px;color:#000">svchost.exe (LocalSystemNetw...</span>
<span class="t" style="left:181.50px;top:465.19px;font-size:11px;letter-spacing:-0.300px;color:#000">1724</span>
<span class="t" style="left:232.60px;top:465.19px;font-size:11px;letter-spacing:0.250px;color:#000;transform:scaleX(0.9910);transform-origin:0 0">C:\Windows\System32\Win...</span>
<span class="t" style="right:355.30px;top:465.19px;font-size:11px;letter-spacing:-0.300px;color:#000">15.214</span>
<span class="t" style="right:305.30px;top:465.19px;font-size:11px;letter-spacing:-0.300px;color:#000">0</span>
<span class="t" style="right:260.30px;top:465.19px;font-size:11px;letter-spacing:-0.300px;color:#000">15.21</span>
<span class="t" style="left:9.50px;top:482.19px;font-size:11px;letter-spacing:-0.036px;color:#000">svchost.exe (LocalSystemNetw...</span>
<span class="t" style="left:181.50px;top:482.19px;font-size:11px;letter-spacing:-0.300px;color:#000">1724</span>
<span class="t" style="left:232.60px;top:482.19px;font-size:11px;letter-spacing:0.250px;color:#000;transform:scaleX(0.9910);transform-origin:0 0">C:\Windows\System32\Win...</span>
<span class="t" style="right:355.30px;top:482.19px;font-size:11px;letter-spacing:-0.300px;color:#000">8.192</span>
<span class="t" style="right:305.30px;top:482.19px;font-size:11px;letter-spacing:-0.300px;color:#000">0</span>
<span class="t" style="right:260.30px;top:482.19px;font-size:11px;letter-spacing:-0.300px;color:#000">8.19</span>
<span class="t" style="left:9.50px;top:499.19px;font-size:11px;letter-spacing:-0.036px;color:#000">svchost.exe (LocalSystemNetw...</span>
<span class="t" style="left:181.50px;top:499.19px;font-size:11px;letter-spacing:-0.300px;color:#000">1724</span>
<span class="t" style="left:232.60px;top:499.19px;font-size:11px;letter-spacing:0.250px;color:#000;transform:scaleX(0.9910);transform-origin:0 0">C:\Windows\System32\Win...</span>
<span class="t" style="right:355.30px;top:499.19px;font-size:11px;letter-spacing:-0.300px;color:#000">9.362</span>
<span class="t" style="right:305.30px;top:499.19px;font-size:11px;letter-spacing:-0.300px;color:#000">0</span>
<span class="t" style="right:260.30px;top:499.19px;font-size:11px;letter-spacing:-0.300px;color:#000">9.36</span>
</div>
<div class="clip" style="clip-path:inset(0 244px 0 0)">
<span class="t" style="left:9.50px;top:563.69px;font-size:11px;letter-spacing:0.250px;color:#000;transform:scaleX(1.0225);transform-origin:0 0">Disque logique</span>
<span class="t" style="left:189.80px;top:563.69px;font-size:11px;letter-spacing:0.128px;color:#000">Disque p...</span>
<span class="t" style="right:471.45px;top:563.69px;font-size:11px;letter-spacing:0.051px;color:#000">Temps d'...</span>
<span class="t" style="right:403.85px;top:563.69px;font-size:11px;letter-spacing:-0.250px;color:#000;transform:scaleX(1.0115);transform-origin:100% 0">Espace d...</span>
<span class="t" style="right:335.95px;top:563.69px;font-size:11px;letter-spacing:-0.250px;color:#000;transform:scaleX(1.0074);transform-origin:100% 0">Espace t...</span>
<span class="t" style="right:267.55px;top:563.69px;font-size:11px;letter-spacing:0.150px;color:#000">Longueu...</span>
<span class="t" style="left:9.50px;top:584.69px;font-size:11px;letter-spacing:-0.100px;color:#000">C:</span>
<span class="t" style="left:190.00px;top:584.69px;font-size:11px;letter-spacing:-0.300px;color:#000">1</span>
<span class="t" style="right:473.80px;top:584.69px;font-size:11px;letter-spacing:-0.300px;color:#000">8,45</span>
<span class="t" style="right:406.50px;top:584.69px;font-size:11px;letter-spacing:-0.300px;color:#000">20.901</span>
<span class="t" style="right:337.30px;top:584.69px;font-size:11px;letter-spacing:-0.300px;color:#000">121.520</span>
<span class="t" style="right:269.80px;top:584.69px;font-size:11px;letter-spacing:-0.300px;color:#000">0,08</span>
</div>

<!-- red dashed rectangle -->
<svg class="a" style="left:0;top:0" width="786" height="593" fill="none" stroke="#fb0a14" stroke-width="3">
<path d="M225.4 340.2 V333.2 Q225.4 330.6 228 330.6 H241.8"/>
<path d="M244.6 330.6 H370" stroke-dasharray="9.4 3.42"/>
<path d="M372.7 330.6 H386 Q388.7 330.6 388.7 333.3 V340.2"/>
<path d="M388.7 343.6 V505" stroke-dasharray="9 3.6"/>
<path d="M388.7 507 V516 H375.2"/>
<path d="M240.4 516 H372" stroke-dasharray="8.7 3.54"/>
<path d="M237.4 516 H229.6"/>
<path d="M225.4 506.4 V512.6 Q225.4 514.8 227 515.6"/>
<path d="M225.4 344.6 V503" stroke-dasharray="9.3 4.19"/>
</svg>

<!-- window borders -->
<div class="a" style="left:4px;top:0;width:778px;height:1px;background:linear-gradient(90deg,#4f5358 0,#4f5358 509px,#686868 509px)"></div>
<div class="a" style="left:785px;top:4px;width:1px;height:589px;background:#5a5a5a"></div>
<div class="a" style="left:0;top:4px;width:1px;height:589px;background:#666"></div>
<div class="a" style="left:0;top:592px;width:786px;height:1px;background:#5a5a5a"></div>
</div>
</body></html>
